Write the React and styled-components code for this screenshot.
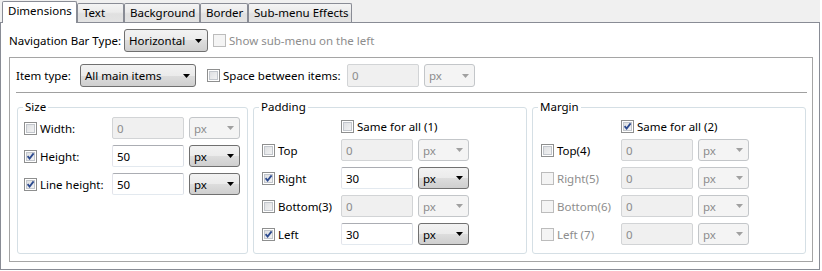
import React from "react";
import styled, { createGlobalStyle } from "styled-components";

const Global = createGlobalStyle`
  html, body { margin: 0; padding: 0; background: #fff; }
  body {
    font-family: "Noto Sans", "Open Sans", sans-serif;
    font-size: 11.5px;
    color: #000;
  }
  * { box-sizing: border-box; }
`;

const Window = styled.div`
  width: 822px;
  height: 271px;
  background: #fff;
`;

const TabStrip = styled.div`
  display: flex;
  align-items: flex-end;
  width: 820px;
  height: 22px;
  padding-left: 2px;
  background: #f0f0f0;
`;

const Tab = styled.div`
  position: relative;
  z-index: ${(p) => (p.$active ? 2 : 0)};
  width: ${(p) => p.$w}px;
  height: ${(p) => (p.$active ? 22 : 19)}px;
  margin-bottom: ${(p) => (p.$active ? -1 : 0)}px;
  padding: 1px 0 0 5px;
  border: 1px solid #898c95;
  border-bottom: none;
  border-radius: 2px 2px 0 0;
  background: ${(p) =>
    p.$active
      ? "#fff"
      : "linear-gradient(to bottom, #f4f4f4, #ebebeb 45%, #e0e0e0 55%, #e3e3e3)"};
  line-height: 15px;
  white-space: nowrap;
`;

const Panel = styled.div`
  display: flex;
  flex-direction: column;
  width: 820px;
  height: 248px;
  padding: 6px 6px 0 8px;
  border: 1px solid #898c95;
  background: #fff;
`;

const Row = styled.div`
  display: flex;
  align-items: center;
  height: ${(p) => p.$h || 23}px;
  flex: none;
`;

const Label = styled.span`
  width: ${(p) => p.$w}px;
  flex: none;
  white-space: nowrap;
  color: ${(p) => (p.$disabled ? "#8d8d8d" : "#000")};
`;

const Combo = styled.div`
  display: flex;
  align-items: center;
  justify-content: space-between;
  flex: none;
  width: ${(p) => p.$w}px;
  height: ${(p) => p.$h || 22}px;
  margin-left: ${(p) => p.$ml || 0}px;
  padding: 0 5px 0 4px;
  border: 1px solid ${(p) => (p.$disabled ? "#c3c6c9" : "#707070")};
  border-radius: 3px;
  background: ${(p) =>
    p.$disabled
      ? "#f4f4f4"
      : "linear-gradient(to bottom, #f2f2f2, #ebebeb 50%, #dddddd 50%, #cfcfcf)"};
  color: ${(p) => (p.$disabled ? "#8d8d8d" : "#000")};
  white-space: nowrap;
`;

const TextBox = styled.input`
  flex: none;
  width: 72px;
  height: ${(p) => p.$h || 22}px;
  margin: 0 0 0 ${(p) => p.$ml || 0}px;
  padding: 0 0 0 4px;
  border: 1px solid;
  border-color: ${(p) =>
    p.disabled ? "#d2d4d6" : "#abadb3 #dbdfe6 #e3e9ef #e2e3ea"};
  border-radius: 2px;
  background: ${(p) => (p.disabled ? "#f0f0f0" : "#fff")};
  color: ${(p) => (p.disabled ? "#8d8d8d" : "#000")};
  font: inherit;
  outline: none;
  -webkit-text-fill-color: ${(p) => (p.disabled ? "#8d8d8d" : "#000")};
  opacity: 1;
`;

const CheckLabel = styled.label`
  display: flex;
  align-items: center;
  gap: 3px;
  flex: none;
  width: ${(p) => (p.$w ? `${p.$w}px` : "auto")};
  margin-left: ${(p) => p.$ml || 0}px;
  white-space: nowrap;
  color: ${(p) => (p.$disabled ? "#8d8d8d" : "#000")};
`;

const Box = styled.span`
  position: relative;
  display: inline-block;
  flex: none;
  width: 13px;
  height: 13px;
  border: 1px solid ${(p) => (p.$disabled ? "#bcbcbc" : "#8e8f8f")};
  background: ${(p) =>
    p.$disabled ? "#f4f4f4" : "linear-gradient(135deg, #d9dbde, #f7f7f7)"};
  box-shadow: ${(p) =>
    p.$disabled ? "none" : "inset 0 0 0 1px #fff, inset 0 0 0 2px #c2c6cc"};
  svg { position: absolute; left: 0; top: 0; }
`;

const InnerBox = styled.div`
  display: flex;
  flex-direction: column;
  width: 804px;
  height: 205px;
  margin-top: 5px;
  padding: 6px 5px 7px 6px;
  border: 1px solid #a5a5a5;
`;

const Separator = styled.div`
  height: 1px;
  flex: none;
  margin: 5px 0 0 0;
  background: #a0a0a0;
`;

const Groups = styled.div`
  display: flex;
  gap: 5px;
  margin: 6px 0 0 1px;
  align-items: stretch;
`;

const Group = styled.fieldset`
  display: block;
  flex: none;
  width: ${(p) => p.$w}px;
  min-width: 0;
  margin: 0;
  padding: 0 0 8px 0;
  border: 1px solid #d5dfe5;
  border-radius: 3px;
`;

const Legend = styled.legend`
  margin-left: 5px;
  padding: 0 2px;
  line-height: 16px;
`;

const GroupBody = styled.div`
  display: flex;
  flex-direction: column;
  gap: 6px;
  padding: 2px 0 0 ${(p) => p.$pl}px;
`;

const SameRow = styled.div`
  display: flex;
  align-items: center;
  height: 18px;
  margin: 0 0 -2px ${(p) => p.$ml}px;
`;

const Arrow = ({ disabled }) => (
  <svg width="7" height="4" viewBox="0 0 7 4">
    <polygon points="0,0 7,0 3.5,4" fill={disabled ? "#a0a0a0" : "#000"} />
  </svg>
);

const Check = ({ checked, disabled, label, w, ml }) => (
  <CheckLabel $w={w} $ml={ml} $disabled={disabled}>
    <Box $disabled={disabled}>
      {checked && (
        <svg width="11" height="11" viewBox="0 0 11 11">
          <path
            d="M2.6 5.2 L4.6 7.6 L8.6 2.4"
            fill="none"
            stroke={disabled ? "#9aa3b5" : "#2c4a8f"}
            strokeWidth="1.8"
          />
        </svg>
      )}
    </Box>
    {label}
  </CheckLabel>
);

const Select = ({ value, w, disabled, ml, h }) => (
  <Combo $w={w} $disabled={disabled} $ml={ml} $h={h}>
    <span>{value}</span>
    <Arrow disabled={disabled} />
  </Combo>
);

const FieldRow = ({ row, labelW }) => (
  <Row $h={22}>
    <Check
      w={labelW}
      label={row.label}
      checked={row.checked}
      disabled={row.cbDisabled}
    />
    <TextBox readOnly value={row.value} disabled={!row.enabled} />
    <Select value="px" w={51} ml={5} disabled={!row.enabled} />
  </Row>
);

const tabs = [
  { label: "Dimensions", w: 75, active: true },
  { label: "Text", w: 47 },
  { label: "Background", w: 76 },
  { label: "Border", w: 48 },
  { label: "Sub-menu Effects", w: 104 },
];

const groups = [
  {
    title: "Size",
    w: 231,
    pl: 6,
    labelW: 88,
    rows: [
      { label: "Width:", checked: false, enabled: false, value: "0" },
      { label: "Height:", checked: true, enabled: true, value: "50" },
      { label: "Line height:", checked: true, enabled: true, value: "50" },
    ],
  },
  {
    title: "Padding",
    w: 274,
    pl: 8,
    labelW: 79,
    same: { label: "Same for all (1)", checked: false },
    rows: [
      { label: "Top", checked: false, enabled: false, value: "0" },
      { label: "Right", checked: true, enabled: true, value: "30" },
      { label: "Bottom(3)", checked: false, enabled: false, value: "0" },
      { label: "Left", checked: true, enabled: true, value: "30" },
    ],
  },
  {
    title: "Margin",
    w: 274,
    pl: 8,
    labelW: 80,
    same: { label: "Same for all (2)", checked: true },
    rows: [
      { label: "Top(4)", checked: false, enabled: false, value: "0" },
      { label: "Right(5)", checked: false, cbDisabled: true, enabled: false, value: "0" },
      { label: "Bottom(6)", checked: false, cbDisabled: true, enabled: false, value: "0" },
      { label: "Left (7)", checked: false, cbDisabled: true, enabled: false, value: "0" },
    ],
  },
];

export default function App() {
  return (
    <Window>
      <Global />
      <TabStrip>
        {tabs.map((t) => (
          <Tab key={t.label} $w={t.w} $active={t.active}>
            {t.label}
          </Tab>
        ))}
      </TabStrip>
      <Panel>
        <Row>
          <Label $w={115}>Navigation Bar Type:</Label>
          <Select value="Horizontal" w={84} h={23} />
          <Check ml={5} disabled label="Show sub-menu on the left" />
        </Row>
        <InnerBox>
          <Row>
            <Label $w={64}>Item type:</Label>
            <Select value="All main items" w={116} h={23} />
            <Check ml={11} w={140} label="Space between items:" />
            <TextBox readOnly value="0" disabled $h={23} />
            <Select value="px" w={51} ml={5} h={23} disabled />
          </Row>
          <Separator />
          <Groups>
            {groups.map((g) => (
              <Group key={g.title} $w={g.w}>
                <Legend>{g.title}</Legend>
                <GroupBody $pl={g.pl}>
                  {g.same && (
                    <SameRow $ml={g.labelW}>
                      <Check label={g.same.label} checked={g.same.checked} />
                    </SameRow>
                  )}
                  {g.rows.map((r) => (
                    <FieldRow key={r.label} row={r} labelW={g.labelW} />
                  ))}
                </GroupBody>
              </Group>
            ))}
          </Groups>
        </InnerBox>
      </Panel>
    </Window>
  );
}
